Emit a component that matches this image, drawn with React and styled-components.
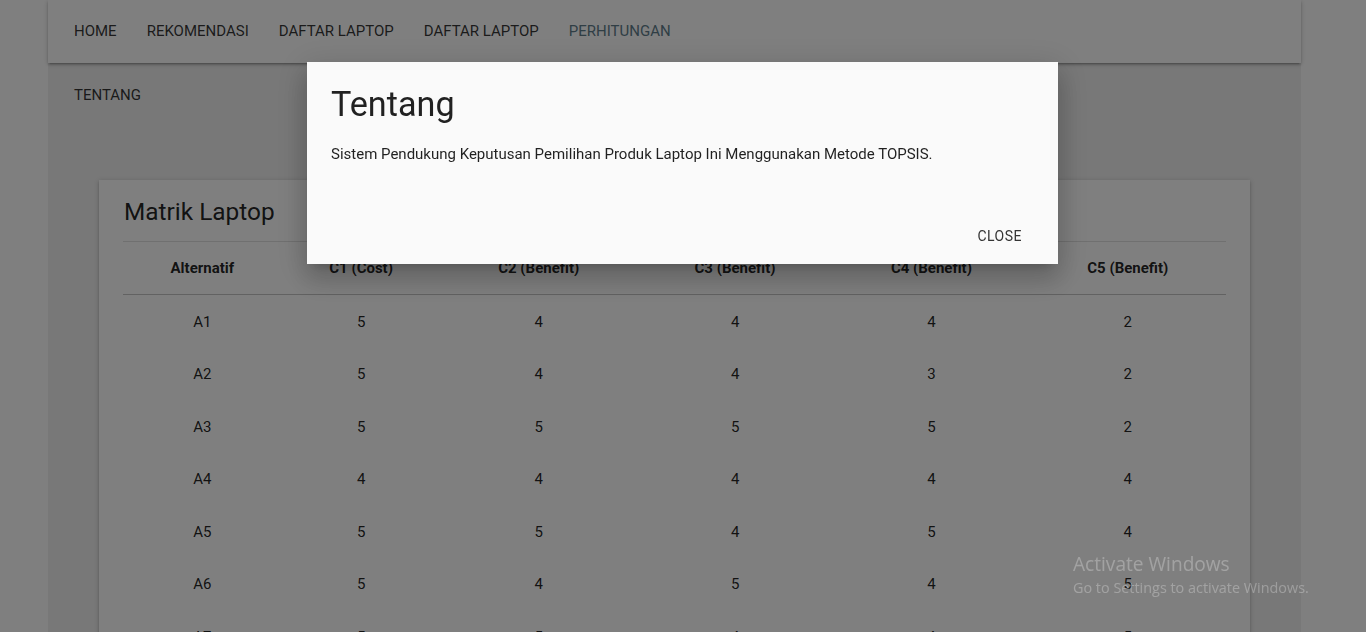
import styled, { createGlobalStyle } from "styled-components";

const GlobalStyle = createGlobalStyle`
  html, body {
    margin: 0;
    padding: 0;
    background: #ffffff;
    font-family: Roboto, "Liberation Sans", sans-serif;
    font-size: 15px;
    color: rgba(0, 0, 0, 0.87);
    overflow: hidden;
  }
`;

const menu = [
  { label: "HOME" },
  { label: "REKOMENDASI" },
  { label: "DAFTAR LAPTOP" },
  { label: "DAFTAR LAPTOP" },
  { label: "PERHITUNGAN", active: true },
];

const columns = ["Alternatif", "C1 (Cost)", "C2 (Benefit)", "C3 (Benefit)", "C4 (Benefit)", "C5 (Benefit)"];

const rows = [
  ["A1", 5, 4, 4, 4, 2],
  ["A2", 5, 4, 4, 3, 2],
  ["A3", 5, 5, 5, 5, 2],
  ["A4", 4, 4, 4, 4, 4],
  ["A5", 5, 5, 4, 5, 4],
  ["A6", 5, 4, 5, 4, 5],
  ["A7", 5, 5, 4, 4, 5],
];

export default function App() {
  return (
    <>
      <GlobalStyle />
      <Page>
        <NavBar>
          <NavList>
            {menu.map((m, i) => (
              <NavItem key={i} $active={m.active}>{m.label}</NavItem>
            ))}
          </NavList>
        </NavBar>
        <SubMenu>TENTANG</SubMenu>
        <Card>
          <CardTitle>Matrik Laptop</CardTitle>
          <Table>
            <thead>
              <tr>
                {columns.map((c) => (
                  <th key={c}>{c}</th>
                ))}
              </tr>
            </thead>
            <tbody>
              {rows.map((r) => (
                <tr key={r[0]}>
                  {r.map((v, i) => (
                    <td key={i}>{v}</td>
                  ))}
                </tr>
              ))}
            </tbody>
          </Table>
        </Card>
      </Page>

      <Overlay>
        <Modal>
          <ModalContent>
            <ModalTitle>Tentang</ModalTitle>
            <ModalText>
              Sistem Pendukung Keputusan Pemilihan Produk Laptop Ini Menggunakan Metode TOPSIS.
            </ModalText>
          </ModalContent>
          <ModalFooter>
            <FlatButton>CLOSE</FlatButton>
          </ModalFooter>
        </Modal>
      </Overlay>

      <Watermark>
        <strong>Activate Windows</strong>
        <span>Go to Settings to activate Windows.</span>
      </Watermark>
    </>
  );
}

const Page = styled.div`
  margin-left: 48px;
  width: 1253px;
  min-height: 700px;
  background: #f0f0f0;
`;

const NavBar = styled.nav`
  height: 63px;
  background: #ffffff;
  box-shadow: 0 2px 2px 0 rgba(0, 0, 0, 0.14), 0 3px 1px -2px rgba(0, 0, 0, 0.12),
    0 1px 5px 0 rgba(0, 0, 0, 0.2);
  position: relative;
`;

const NavList = styled.ul`
  list-style: none;
  margin: 0;
  padding: 0 0 0 11px;
  display: flex;
`;

const NavItem = styled.li`
  padding: 0 15px;
  line-height: 63px;
  font-size: 15px;
  color: ${(p) => (p.$active ? "#607d8b" : "rgba(0, 0, 0, 0.8)")};
`;

const SubMenu = styled.div`
  padding: 22px 0 0 26px;
  line-height: 20px;
  font-size: 15px;
  color: rgba(0, 0, 0, 0.8);
`;

const Card = styled.div`
  margin: 75px 51px 0;
  background: #ffffff;
  padding: 16px 24px 24px;
  box-shadow: 0 2px 2px 0 rgba(0, 0, 0, 0.14), 0 3px 1px -2px rgba(0, 0, 0, 0.12),
    0 1px 5px 0 rgba(0, 0, 0, 0.2);
`;

const CardTitle = styled.h2`
  margin: 0 0 13px;
  font-size: 24.4px;
  font-weight: 400;
  line-height: 32px;
  padding-left: 1px;
`;

const Table = styled.table`
  width: 100%;
  border-collapse: collapse;
  border-top: 1px solid rgba(0, 0, 0, 0.12);

  thead tr {
    border-bottom: 1px solid rgba(0, 0, 0, 0.12);
  }

  th,
  td {
    text-align: center;
    font-size: 15px;
    line-height: 22.5px;
  }

  th {
    font-weight: 700;
    padding: 15px 5px 14px;
  }

  td {
    font-weight: 400;
    padding: 16px 5px 14px;
  }
`;

const Overlay = styled.div`
  position: fixed;
  inset: 0;
  background: rgba(0, 0, 0, 0.5);
  display: flex;
  justify-content: center;
  align-items: flex-start;
`;

const Modal = styled.div`
  width: 751px;
  margin: 62px 1px 0 0;
  background: #fafafa;
  box-shadow: 0 16px 24px 2px rgba(0, 0, 0, 0.14), 0 6px 30px 5px rgba(0, 0, 0, 0.12),
    0 8px 10px -7px rgba(0, 0, 0, 0.2);
`;

const ModalContent = styled.div`
  padding: 24px;
`;

const ModalTitle = styled.h4`
  margin: 0 0 19px;
  font-size: 34.2px;
  font-weight: 400;
  line-height: 110%;
  color: rgba(0, 0, 0, 0.87);
`;

const ModalText = styled.p`
  margin: 0 0 19px;
  font-size: 15px;
  line-height: 22.5px;
  color: rgba(0, 0, 0, 0.87);
`;

const ModalFooter = styled.div`
  height: 56px;
  box-sizing: border-box;
  padding: 4px 20px;
  display: flex;
  justify-content: flex-end;
  align-items: center;
`;

const FlatButton = styled.button`
  border: none;
  background: transparent;
  padding: 0 16px;
  height: 36px;
  line-height: 36px;
  font-family: Roboto, "Liberation Sans", sans-serif;
  font-size: 14px;
  letter-spacing: 0.5px;
  color: #343434;
  cursor: pointer;
`;

const Watermark = styled.div`
  position: fixed;
  left: 1073px;
  top: 552px;
  display: flex;
  flex-direction: column;
  font-family: "Open Sans", "Noto Sans", sans-serif;
  color: rgba(255, 255, 255, 0.28);
  pointer-events: none;

  strong {
    font-weight: 400;
    font-size: 19.1px;
    line-height: 25px;
  }

  span {
    font-size: 14.4px;
    line-height: 22px;
  }
`;
